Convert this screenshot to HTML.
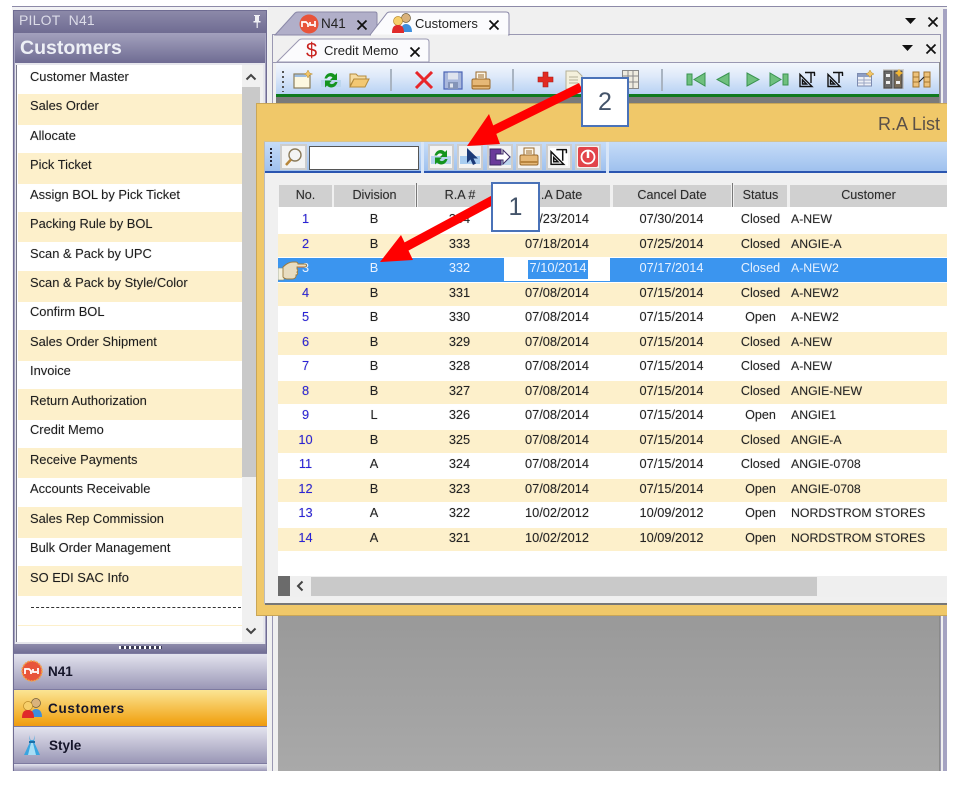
<!DOCTYPE html>
<html><head><meta charset="utf-8"><style>
html,body{margin:0;padding:0;background:#fff}
#p{position:relative;width:974px;height:790px;overflow:hidden;background:#fff;font-family:"Liberation Sans",sans-serif;color:#222}
#p div,#p span.a,#p svg{position:absolute}
.li{left:30px;font-size:12.9px;line-height:18px;height:18px;white-space:nowrap;color:#1c1c1c;text-shadow:0 0 1px rgba(0,0,0,.25)}
.b{left:18px;width:224px;background:#fdf0cb}
.r{left:278px;width:669px;height:23.5px;font-size:12.8px;line-height:20px;white-space:nowrap;overflow:hidden;background:#fff;text-shadow:0 0 1px rgba(0,0,0,.25)}
.y{background:#fdf0cb}
.r span{position:absolute;top:0;text-align:center}
.n{left:0;width:55px;color:#2a22d8}.d{left:55px;width:82px}.ra{left:139px;width:85px}.dt{left:226px;width:106px}.cd{left:334px;width:119px}.s{left:455px;width:55px;font-size:12.6px}.c{left:513px;text-align:left!important;font-size:12.3px}
.h{top:185px;height:22px;background:#d0d0d0;text-align:center;font-size:12.6px;line-height:20px;color:#2a2a2a;text-shadow:0 0 1px rgba(0,0,0,.25)}
.btn{top:144px;width:26px;height:26px;background:#f3f3f3;border:2px solid #cdcdcd;box-sizing:border-box}
.sep{width:2px;top:69px;height:22px;background:#a9b4c2}
.nav{left:14px;width:253px;height:36px;background:linear-gradient(#e3e3ee,#9a97b6);border-top:1px solid #7d7aa0;box-sizing:border-box;font-weight:bold;font-size:13.5px;line-height:35px;color:#15152a}
.nav span{position:absolute;left:34px}
</style></head><body><div id="p">

<!-- outer frame -->
<div style="left:12px;top:6px;width:935px;height:765px;background:#f2f2f4;border-top:1px solid #8d8aa8;box-sizing:border-box"></div>

<!-- LEFT PANEL -->
<div style="left:13px;top:10px;width:254px;height:761px;background:#a5a3c0;border:1px solid #6f6c92;border-bottom:0;box-sizing:border-box"></div>
<div style="left:14px;top:11px;width:252px;height:22px;background:linear-gradient(#8c89a9,#6f6c92)"></div>
<div style="left:19px;top:11px;font-size:14px;line-height:19px;color:#dcdce8;letter-spacing:.2px">PILOT&nbsp; N41</div>
<svg style="left:250px;top:14px" width="14" height="16" viewBox="0 0 14 16"><path d="M4 1h6v1H9v5h1.500v1.500H7.800V14H6.600V8.500H3.500V7H5V2H4z" fill="#f0f0f5"/></svg>
<div style="left:15px;top:33px;width:250px;height:30px;background:linear-gradient(#a3a1bd,#6f6c93)"></div>
<div style="left:20px;top:36px;font-size:19.500px;line-height:24px;font-weight:bold;color:#eef0f6">Customers</div>

<div style="left:15px;top:63px;width:250px;height:581px;background:#e6e6ec"></div>
<div style="left:16px;top:65px;width:247px;height:577px;background:#fff;border-left:1px solid #77778a;box-sizing:border-box"></div>
<div class="b" style="top:94px;height:31px"></div>
<div class="b" style="top:153px;height:31px"></div>
<div class="b" style="top:212px;height:30px"></div>
<div class="b" style="top:271px;height:31px"></div>
<div class="b" style="top:330px;height:31px"></div>
<div class="b" style="top:389px;height:31px"></div>
<div class="b" style="top:448px;height:30px"></div>
<div class="b" style="top:507px;height:31px"></div>
<div class="b" style="top:566px;height:30px"></div>
<div class="b" style="top:625px;height:1px"></div>

<div class="li" style="top:67.500px">Customer Master</div>
<div class="li" style="top:96.500px">Sales Order</div>
<div class="li" style="top:126.500px">Allocate</div>
<div class="li" style="top:155.500px">Pick Ticket</div>
<div class="li" style="top:185.500px">Assign BOL by Pick Ticket</div>
<div class="li" style="top:214.500px">Packing Rule by BOL</div>
<div class="li" style="top:244.500px">Scan &amp; Pack by UPC</div>
<div class="li" style="top:273.500px">Scan &amp; Pack by Style/Color</div>
<div class="li" style="top:303px">Confirm BOL</div>
<div class="li" style="top:332.500px">Sales Order Shipment</div>
<div class="li" style="top:362px">Invoice</div>
<div class="li" style="top:391.500px">Return Authorization</div>
<div class="li" style="top:421px">Credit Memo</div>
<div class="li" style="top:450.500px">Receive Payments</div>
<div class="li" style="top:480px">Accounts Receivable</div>
<div class="li" style="top:509.500px">Sales Rep Commission</div>
<div class="li" style="top:539px">Bulk Order Management</div>
<div class="li" style="top:568.500px">SO EDI SAC Info</div>
<div style="left:31px;top:607px;width:210px;border-top:1px dashed #333"></div>

<!-- list scrollbar -->
<div style="left:242px;top:65px;width:21px;height:577px;background:#f0f0f0"></div>
<div style="left:242px;top:87px;width:18px;height:390px;background:#c9c9c9"></div>
<svg style="left:245px;top:72px" width="12" height="10" viewBox="0 0 12 10"><path d="M1.500 7.500L6 3l4.500 4.500" fill="none" stroke="#444" stroke-width="2"/></svg>
<svg style="left:245px;top:626px" width="12" height="10" viewBox="0 0 12 10"><path d="M1.500 2.500L6 7l4.500-4.500" fill="none" stroke="#444" stroke-width="2"/></svg>

<!-- splitter -->
<div style="left:14px;top:644px;width:252px;height:9px;background:linear-gradient(#8e8bab,#716e95)"></div>
<div style="left:119px;top:646px;width:43px;height:3px;background:repeating-linear-gradient(90deg,#fff 0 2px,#3a3a55 2px 5px)"></div>

<!-- nav buttons -->
<div class="nav" style="top:653px"><span>N41</span></div>
<div class="nav" style="top:689px;height:37px;background:linear-gradient(#fbe594,#f2a81e 85%,#ef9a10);line-height:37px"><span style="letter-spacing:.7px">Customers</span></div>
<div class="nav" style="top:726px;height:37px;line-height:37px"><span style="left:35px">Style</span></div>
<div class="nav" style="top:763px;height:8px"></div>

<svg style="left:21px;top:660px" width="22" height="22" viewBox="0 0 22 22"><circle cx="11" cy="11" r="10" fill="#e8543a"/><circle cx="11" cy="11" r="10" fill="none" stroke="#f3a14a" stroke-width="1.500" stroke-dasharray="2 1"/><path d="M4 14V9h4l2 2v3M12 9v3h4M17 8v6" fill="none" stroke="#fff" stroke-width="1.800"/></svg>
<svg style="left:21px;top:697px" width="22" height="22" viewBox="0 0 22 22"><circle cx="15" cy="6" r="4.500" fill="#d9b27c" stroke="#6a5a3a" stroke-width=".7"/><path d="M10 20c0-6 2-8 5-8s6 2 6 8z" fill="#3d8fdc"/><circle cx="7" cy="9" r="4.500" fill="#f7cf6a" stroke="#b98a2a" stroke-width=".7"/><path d="M1 21c0-6 2-8 6-8s6 2 6 8z" fill="#e02a2a"/></svg>
<svg style="left:23px;top:734px" width="18" height="22" viewBox="0 0 18 22"><path d="M6 1l1.500 5h3L12 1l-1 7 6 13H1L7 8z" fill="#3aa5e0"/><path d="M5 21L8 9h2l3 12z" fill="#a8def5"/><rect x="6" y="7" width="6" height="2" fill="#1a6fa8"/></svg>

<!-- RIGHT AREA -->
<div style="left:268px;top:7px;width:679px;height:764px;background:#f0f0f0"></div>
<div style="left:272px;top:34px;width:669px;height:737px;background:#f0f0f0;border:1px solid #9a98b2;border-bottom:0;box-sizing:border-box"></div>
<div style="left:943px;top:9px;width:4px;height:762px;background:#a5a3c2"></div>
<div style="left:939px;top:62px;width:1px;height:709px;background:#8a8a8a"></div>

<!-- top tabs -->
<svg style="left:272px;top:10px" width="245" height="26" viewBox="0 0 245 26"><path d="M3 25L23 3q1-1 3-1h77q2 0 2 2v21z" fill="#b1afc9" stroke="#8b89a8"/><path d="M98 25L115 3q1-1 3-1h116q3 0 3 3v20z" fill="#fbfbfd" stroke="#8b89a8"/><path d="M99 25h137" stroke="#f0f0f0" stroke-width="1"/></svg>
<svg style="left:299px;top:14px" width="20" height="20" viewBox="0 0 20 20"><circle cx="10" cy="10" r="9.500" fill="#e8543a"/><path d="M3 13V8h4l2 2v3M11 8v3h4M16 7v6" fill="none" stroke="#fff" stroke-width="1.700"/></svg>
<div style="left:321px;top:15px;font-size:13.500px;line-height:18px;color:#222">N41</div>
<svg style="left:356px;top:19px" width="12" height="12" viewBox="0 0 12 12"><path d="M1.500 1.500l9 9M10.500 1.500l-9 9" stroke="#111" stroke-width="1.800"/></svg>
<svg style="left:391px;top:13px" width="22" height="20" viewBox="0 0 22 20"><circle cx="15" cy="5" r="4.500" fill="#d9b27c" stroke="#6a5a3a" stroke-width=".7"/><path d="M10 19c0-6 2-8 5-8s6 2 6 8z" fill="#3d8fdc"/><circle cx="7" cy="8" r="4.500" fill="#f7cf6a" stroke="#b98a2a" stroke-width=".7"/><path d="M1 20c0-6 2-8 6-8s6 2 6 8z" fill="#e02a2a"/></svg>
<div style="left:415px;top:15px;font-size:13px;line-height:18px;color:#222">Customers</div>
<svg style="left:488px;top:19px" width="12" height="12" viewBox="0 0 12 12"><path d="M1.500 1.500l9 9M10.500 1.500l-9 9" stroke="#111" stroke-width="1.800"/></svg>
<svg style="left:905px;top:18px" width="11" height="7" viewBox="0 0 11 7"><path d="M0 0h11L5.500 6z" fill="#111"/></svg>
<svg style="left:927px;top:16px" width="12" height="12" viewBox="0 0 12 12"><path d="M1.500 1.500l9 9M10.500 1.500l-9 9" stroke="#111" stroke-width="1.800"/></svg>

<!-- second tab -->
<div style="left:273px;top:62px;width:666px;height:1px;background:#9a98b2"></div>
<svg style="left:274px;top:37px" width="160" height="27" viewBox="0 0 160 27"><path d="M3 25L25 3q1-1 3-1h124q3 0 3 3v20z" fill="#fbfbfd" stroke="#9a98b2"/></svg>
<div style="left:306px;top:40px;font-size:20px;line-height:22px;color:#c8201c">$</div>
<div style="left:324px;top:42px;font-size:13px;line-height:18px;color:#222">Credit Memo</div>
<svg style="left:409px;top:46px" width="12" height="12" viewBox="0 0 12 12"><path d="M1.500 1.500l9 9M10.500 1.500l-9 9" stroke="#111" stroke-width="1.800"/></svg>
<svg style="left:902px;top:45px" width="11" height="7" viewBox="0 0 11 7"><path d="M0 0h11L5.500 6z" fill="#111"/></svg>
<svg style="left:925px;top:43px" width="12" height="12" viewBox="0 0 12 12"><path d="M1.500 1.500l9 9M10.500 1.500l-9 9" stroke="#111" stroke-width="1.800"/></svg>

<!-- main toolbar -->
<div style="left:276px;top:63px;width:663px;height:32px;background:linear-gradient(#f3f7fc,#dfeafa 40%,#b6d1f3)"></div>
<div style="left:276px;top:94px;width:663px;height:3px;background:#0f7a1e"></div>
<div style="left:276px;top:97px;width:663px;height:7px;background:#7a7a7a"></div>
<div style="left:282px;top:71px;width:2px;height:21px;background:repeating-linear-gradient(#555 0 2px,transparent 2px 5px)"></div>
<div class="sep" style="left:390px"></div><div class="sep" style="left:512px"></div><div class="sep" style="left:661px"></div>

<svg style="left:292px;top:70px" width="22" height="20" viewBox="0 0 22 20"><rect x="2" y="4" width="16" height="14" fill="#fdf8e0" stroke="#8a7d5a" stroke-width="1.200"/><rect x="2.500" y="4.500" width="12" height="2.500" fill="#9dbde0"/><path d="M16 0l1.500 3 3 1-3 1-1.500 3-1.500-3-3-1 3-1z" fill="#f2c66a" stroke="#b98a2a" stroke-width=".5"/></svg>
<svg style="left:321px;top:69px" width="20" height="22" viewBox="0 0 20 22"><rect x="0" y="11" width="20" height="7" fill="#bcd6ee"/><path d="M3.500 9.500C5 3.500 11 2.500 14 6l2-2v7h-7l2.500-2.500c-2-2-4.500-1-5.500 1zM16.500 13c-1.500 6-7.500 7-10.500 3.500l-2 2v-7h7L8.500 14c2 2 4.500 1 5.500-1z" fill="#14941e"/></svg>
<svg style="left:349px;top:72px" width="21" height="16" viewBox="0 0 21 16"><path d="M1 14V2h6l2 2h8v3H5z" fill="#f6dca2" stroke="#b48b3e"/><path d="M1 15l4-8h15l-4 8z" fill="#f3c873" stroke="#b48b3e"/></svg>
<svg style="left:414px;top:71px" width="20" height="18" viewBox="0 0 20 18"><path d="M2 1l16 16M18 1L2 17" stroke="#e8262a" stroke-width="3"/></svg>
<svg style="left:443px;top:71px" width="20" height="19" viewBox="0 0 20 19"><path d="M1 1h18v17H1z" fill="#a9b8dc" stroke="#4c66b6" stroke-width="1.200"/><rect x="5" y="1.500" width="10" height="7" fill="#dfe4ee"/><rect x="5" y="11" width="10" height="7" fill="#8494b8"/><rect x="7" y="12.500" width="3" height="4" fill="#dfe4ee"/></svg>
<svg style="left:471px;top:71px" width="20" height="19" viewBox="0 0 20 19"><rect x="5" y="1" width="10" height="8" fill="#fdf7e8" stroke="#9a6a2d"/><path d="M7 4h6M7 6h6" stroke="#9a6a2d"/><rect x="1" y="8" width="18" height="10" rx="1.500" fill="#e6b877" stroke="#9a6a2d"/><rect x="1" y="14" width="18" height="2" fill="#b9853f"/></svg>
<svg style="left:537px;top:71px" width="17" height="17" viewBox="0 0 17 17"><path d="M6 1h5v5h5v5h-5v5H6v-5H1V6h5z" fill="#e22a22" stroke="#a81a14" stroke-width=".6"/></svg>
<svg style="left:565px;top:70px" width="18" height="20" viewBox="0 0 18 20"><path d="M1 1h11l5 5v13H1z" fill="#f4f0dc" stroke="#b4b098"/><path d="M4 7h9M4 10h9M4 13h9" stroke="#b4b098"/></svg>
<svg style="left:622px;top:70px" width="17" height="19" viewBox="0 0 17 19"><rect x=".5" y=".5" width="16" height="18" fill="#efece0" stroke="#888"/><path d="M6 1v17M11 1v17M1 6h15M1 12h15" stroke="#888"/></svg>

<svg style="left:686px;top:72px" width="20" height="15" viewBox="0 0 20 15"><rect x="1" y="2" width="5" height="11" fill="#6fc07e" stroke="#3a9350"/><path d="M19 1v13L8 7.500z" fill="#6fc07e" stroke="#3a9350"/></svg>
<svg style="left:716px;top:72px" width="14" height="15" viewBox="0 0 14 15"><path d="M13 1v13L1 7.500z" fill="#6fc07e" stroke="#3a9350"/></svg>
<svg style="left:746px;top:72px" width="14" height="15" viewBox="0 0 14 15"><path d="M1 1v13l12-6.500z" fill="#6fc07e" stroke="#3a9350"/></svg>
<svg style="left:769px;top:72px" width="20" height="15" viewBox="0 0 20 15"><path d="M1 1v13l11-6.500z" fill="#6fc07e" stroke="#3a9350"/><rect x="14" y="2" width="5" height="11" fill="#6fc07e" stroke="#3a9350"/></svg>
<svg style="left:799px;top:71px" width="17" height="17" viewBox="0 0 17 17"><g fill="none" stroke="#111" stroke-width="1.400"><path d="M1 15.500V3.500l12 12zM3.500 13V9l4 4z"/><path d="M6 1.500h10M12 1.500V12M15.500 1.500V5"/></g></svg>
<svg style="left:827px;top:71px" width="17" height="17" viewBox="0 0 17 17"><g fill="none" stroke="#111" stroke-width="1.400"><path d="M1 15.500V3.500l12 12zM3.500 13V9l4 4z"/><path d="M6 1.500h10M12 1.500V12M15.500 1.500V5"/></g></svg>
<svg style="left:857px;top:70px" width="17" height="17" viewBox="0 0 17 17"><rect x=".5" y="3.500" width="14" height="12.500" fill="#eef0f6" stroke="#7d8bb0"/><rect x="1" y="4" width="13" height="3" fill="#8e9ec4"/><path d="M1 10h13M1 13h13M7 7v9" stroke="#9aa6c4"/><path d="M13 0l1.500 2.500L17 4l-2.500 1.200L13 7.500l-1.500-2.300L9 4l2.500-1.500z" fill="#f2c66a" stroke="#b98a2a" stroke-width=".5"/></svg>
<svg style="left:883px;top:69px" width="21" height="20" viewBox="0 0 21 20"><rect x="0" y="0" width="21" height="20" fill="#b8b0a4" opacity=".5"/><rect x="1" y="2" width="8" height="17" fill="#6a6a6a" stroke="#444"/><rect x="11" y="2" width="8" height="17" fill="#7a6c58" stroke="#444"/><rect x="3" y="5" width="4" height="3" fill="#eee"/><rect x="3" y="12" width="4" height="3" fill="#eee"/><rect x="13" y="12" width="4" height="3" fill="#eee"/><path d="M16 0l1.500 2.500L20 4l-2.500 1.500L16 8l-1.500-2.500L12 4l2.500-1.500z" fill="#f2b632"/></svg>
<svg style="left:912px;top:71px" width="19" height="17" viewBox="0 0 19 17"><rect x="1" y="1" width="6" height="15" fill="#eec27a" stroke="#a37530"/><rect x="12" y="1" width="6" height="15" fill="#eec27a" stroke="#a37530"/><path d="M1 6h6M1 11h6M12 6h6M12 11h6" stroke="#a37530"/><path d="M7 11l5-5" stroke="#222"/></svg>

<!-- GRAY WORKSPACE -->
<div style="left:278px;top:104px;width:661px;height:667px;background:#999"></div>
<div style="left:278px;top:615px;width:661px;height:156px;background:linear-gradient(#999,#a9a9a9)"></div>

<!-- RA LIST WINDOW -->
<div style="left:256px;top:103px;width:691px;height:513px;background:#f0c869;border-top:1px solid #c9a657;border-left:1px solid #c9a657;border-bottom:1px solid #c9a657;box-sizing:border-box"></div>
<div style="left:264px;top:141px;width:683px;height:463px;background:#f0f0f0;border-left:1px solid #bbb;border-top:1px solid #d8c38a;box-sizing:border-box"></div>
<div style="left:265px;top:603px;width:682px;height:2px;background:#777"></div>
<div style="left:878px;top:113px;width:66px;font-size:18px;line-height:22px;color:#5a5048;white-space:nowrap">R.A List</div>

<!-- RA toolbar -->
<div style="left:265px;top:142px;width:682px;height:31px;background:linear-gradient(#c6dcf8,#9fc1ee);border-bottom:2px solid #2a55b0;box-sizing:border-box"></div>
<div style="left:421px;top:142px;width:3px;height:31px;background:#d8e6f8"></div>
<div style="left:606px;top:142px;width:3px;height:31px;background:#d8e6f8"></div>
<div style="left:270px;top:148px;width:2px;height:18px;background:repeating-linear-gradient(#223 0 2px,transparent 2px 4px)"></div>
<div class="btn" style="left:280px;width:27px"></div>
<svg style="left:284px;top:147px" width="19" height="20" viewBox="0 0 19 20"><circle cx="11" cy="8" r="6" fill="#f4f4f4" stroke="#8a7a5a" stroke-width="1.400"/><path d="M7 12.500L2 18" stroke="#b8863a" stroke-width="2.500"/></svg>
<div style="left:309px;top:146px;width:110px;height:24px;background:#fff;border:1px solid #555;box-sizing:border-box"></div>

<div class="btn" style="left:428px"></div><div class="btn" style="left:457px"></div><div class="btn" style="left:487px"></div><div class="btn" style="left:516px"></div><div class="btn" style="left:546px"></div><div class="btn" style="left:575px"></div>
<svg style="left:431px;top:146px" width="20" height="22" viewBox="0 0 20 22"><rect x="0" y="10" width="20" height="8" fill="#b7d4ef"/><path d="M3.500 9.500C5 3.500 11 2.500 14 6l2-2v7h-7l2.500-2.500c-2-2-4.500-1-5.500 1zM16.500 13c-1.500 6-7.500 7-10.500 3.500l-2 2v-7h7L8.500 14c2 2 4.500 1 5.500-1z" fill="#14941e"/></svg>
<svg style="left:460px;top:146px" width="20" height="21" viewBox="0 0 20 21"><rect x="0" y="10" width="20" height="8" fill="#a9cdf0"/><path d="M7 2v15l3.500-3.500L13 19l3-1.500-2.500-5H18z" fill="#1c3a78"/></svg>
<svg style="left:489px;top:147px" width="22" height="20" viewBox="0 0 22 20"><rect x="0" y="9" width="22" height="9" fill="#bcd6ee"/><path d="M1 2h11v5H7v6h5v5H1z" fill="#6a3a9a" stroke="#3c2a66"/><path d="M7 7h7V3l7 7-7 7v-4H7z" fill="#fff" stroke="#3c2a66"/></svg>
<svg style="left:519px;top:147px" width="20" height="19" viewBox="0 0 20 19"><rect x="5" y="1" width="10" height="8" fill="#fdf7e8" stroke="#9a6a2d"/><path d="M7 4h6M7 6h6" stroke="#9a6a2d"/><rect x="1" y="8" width="18" height="10" rx="1.500" fill="#e6b877" stroke="#9a6a2d"/><rect x="1" y="14" width="18" height="2" fill="#b9853f"/></svg>
<svg style="left:550px;top:148px" width="18" height="18" viewBox="0 0 17 17"><rect width="17" height="17" fill="#fff"/><g fill="none" stroke="#111" stroke-width="1.400"><path d="M1 15.500V3.500l12 12zM3.500 13V9l4 4z"/><path d="M6 1.500h10M12 1.500V12M15.500 1.500V5"/></g></svg>
<svg style="left:578px;top:147px" width="20" height="20" viewBox="0 0 20 20"><rect width="20" height="20" rx="2" fill="#e2444a"/><circle cx="10" cy="10" r="6.500" fill="none" stroke="#fff" stroke-width="1.800"/><path d="M10 3v8" stroke="#fff" stroke-width="2.500"/></svg>

<!-- Table -->
<div style="left:278px;top:207px;width:669px;height:369px;background:#fff"></div>
<div class="h" style="left:279px;width:53px">No.</div>
<div class="h" style="left:334px;width:81px">Division</div>
<div class="h" style="left:418px;width:84px">R.A #</div>
<div class="h" style="left:504px;width:106px">R.A Date</div>
<div class="h" style="left:613px;width:118px">Cancel Date</div>
<div class="h" style="left:734px;width:53px">Status</div>
<div class="h" style="left:790px;width:157px">Customer</div>
<div style="left:416px;top:183px;width:1px;height:24px;background:#777"></div>
<div style="left:732px;top:183px;width:1px;height:24px;background:#777"></div>

<div class="r" style="top:209px"><span class="n">1</span><span class="d">B</span><span class="ra">334</span><span class="dt">07/23/2014</span><span class="cd">07/30/2014</span><span class="s">Closed</span><span class="c">A-NEW</span></div>
<div class="r y" style="top:233.500px"><span class="n">2</span><span class="d">B</span><span class="ra">333</span><span class="dt">07/18/2014</span><span class="cd">07/25/2014</span><span class="s">Closed</span><span class="c">ANGIE-A</span></div>
<div class="r" style="top:258px;background:#3b95ef;color:#e8f2ff;text-shadow:none"><span class="n" style="color:#e8f2ff">3</span><span class="d">B</span><span class="ra">332</span><span class="cd">07/17/2014</span><span class="s">Closed</span><span class="c">A-NEW2</span><span style="left:226px;width:106px;height:23px;background:#fff"></span><span style="left:250px;width:60px;height:19px;top:2px;line-height:16px;background:#3b95ef;color:#e8f2ff">7/10/2014</span></div>
<div class="r y" style="top:282.500px"><span class="n">4</span><span class="d">B</span><span class="ra">331</span><span class="dt">07/08/2014</span><span class="cd">07/15/2014</span><span class="s">Closed</span><span class="c">A-NEW2</span></div>
<div class="r" style="top:307px"><span class="n">5</span><span class="d">B</span><span class="ra">330</span><span class="dt">07/08/2014</span><span class="cd">07/15/2014</span><span class="s">Open</span><span class="c">A-NEW2</span></div>
<div class="r y" style="top:331.500px"><span class="n">6</span><span class="d">B</span><span class="ra">329</span><span class="dt">07/08/2014</span><span class="cd">07/15/2014</span><span class="s">Closed</span><span class="c">A-NEW</span></div>
<div class="r" style="top:356px"><span class="n">7</span><span class="d">B</span><span class="ra">328</span><span class="dt">07/08/2014</span><span class="cd">07/15/2014</span><span class="s">Closed</span><span class="c">A-NEW</span></div>
<div class="r y" style="top:380.500px"><span class="n">8</span><span class="d">B</span><span class="ra">327</span><span class="dt">07/08/2014</span><span class="cd">07/15/2014</span><span class="s">Closed</span><span class="c">ANGIE-NEW</span></div>
<div class="r" style="top:405px"><span class="n">9</span><span class="d">L</span><span class="ra">326</span><span class="dt">07/08/2014</span><span class="cd">07/15/2014</span><span class="s">Open</span><span class="c">ANGIE1</span></div>
<div class="r y" style="top:429.500px"><span class="n">10</span><span class="d">B</span><span class="ra">325</span><span class="dt">07/08/2014</span><span class="cd">07/15/2014</span><span class="s">Closed</span><span class="c">ANGIE-A</span></div>
<div class="r" style="top:454px"><span class="n">11</span><span class="d">A</span><span class="ra">324</span><span class="dt">07/08/2014</span><span class="cd">07/15/2014</span><span class="s">Closed</span><span class="c">ANGIE-0708</span></div>
<div class="r y" style="top:478.500px"><span class="n">12</span><span class="d">B</span><span class="ra">323</span><span class="dt">07/08/2014</span><span class="cd">07/15/2014</span><span class="s">Open</span><span class="c">ANGIE-0708</span></div>
<div class="r" style="top:503px"><span class="n">13</span><span class="d">A</span><span class="ra">322</span><span class="dt">10/02/2012</span><span class="cd">10/09/2012</span><span class="s">Open</span><span class="c">NORDSTROM STORES</span></div>
<div class="r y" style="top:527.500px"><span class="n">14</span><span class="d">A</span><span class="ra">321</span><span class="dt">10/02/2012</span><span class="cd">10/09/2012</span><span class="s">Open</span><span class="c">NORDSTROM STORES</span></div>

<!-- hand pointer -->
<svg style="left:278px;top:258px" width="30" height="24" viewBox="0 0 30 24"><rect x="0" y="10" width="6" height="12" fill="#f4f0dc" stroke="#7a8a80" stroke-width=".6"/><path d="M5 9c2-2 6-5 10-5h3c1 0 2 1 2 2h7c2 0 2 3 0 3h-8v2c1 0 1 2 0 3 1 0 1 3-1 3v1c0 2-2 3-4 3H9c-2 0-3-1-4-2z" fill="#e8dcc0" stroke="#9a7a3e" stroke-width=".9"/><path d="M20 9h6" stroke="#d4702a" stroke-width="1"/></svg>

<!-- h scrollbar -->
<div style="left:278px;top:576px;width:669px;height:21px;background:#efefef"></div>
<div style="left:278px;top:576px;width:12px;height:20px;background:#6b6b6b"></div>
<svg style="left:295px;top:580px" width="10" height="12" viewBox="0 0 10 12"><path d="M7.500 1.500L3 6l4.500 4.500" fill="none" stroke="#444" stroke-width="2"/></svg>
<div style="left:311px;top:577px;width:506px;height:19px;background:#c9c9c9"></div>

<!-- arrows -->
<svg style="left:0;top:0" width="974" height="790" viewBox="0 0 974 790"><path d="M581 87L484 135" stroke="#f00" stroke-width="9" fill="none"/><path d="M467 146L489 114L500 144z" fill="#f00"/><path d="M493 200L400 250" stroke="#f00" stroke-width="9" fill="none"/><path d="M380 262L401 235L413 260z" fill="#f00"/></svg>

<!-- callouts -->
<div style="left:581px;top:77px;width:48px;height:50px;background:#fff;border:2px solid #4a72b8;box-sizing:border-box;text-align:center;font-size:25px;line-height:46px;color:#44546a">2</div>
<div style="left:491px;top:182px;width:49px;height:50px;background:#fff;border:2px solid #4a72b8;box-sizing:border-box;text-align:center;font-size:25px;line-height:46px;color:#44546a">1</div>

<div style="left:0;top:771px;width:974px;height:19px;background:#fff"></div>
</div></body></html>
